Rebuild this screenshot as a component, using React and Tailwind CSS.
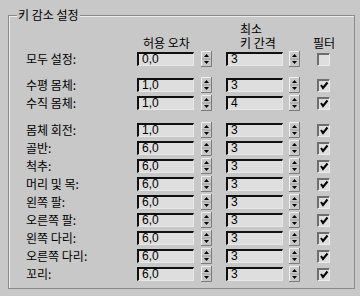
import React from 'react';

const rows = [
  { label: '모두 설정:', tol: '0,0', gap: '3', checked: false, mt: '' },
  { label: '수평 몸체:', tol: '1,0', gap: '3', checked: true, mt: 'mt-[8px]' },
  { label: '수직 몸체:', tol: '1,0', gap: '4', checked: true, mt: '' },
  { label: '몸체 회전:', tol: '1,0', gap: '3', checked: true, mt: 'mt-[9px]' },
  { label: '골반:', tol: '6,0', gap: '3', checked: true, mt: '' },
  { label: '척추:', tol: '6,0', gap: '3', checked: true, mt: '' },
  { label: '머리 및 목:', tol: '6,0', gap: '3', checked: true, mt: '' },
  { label: '왼쪽 팔:', tol: '6,0', gap: '3', checked: true, mt: '' },
  { label: '오른쪽 팔:', tol: '6,0', gap: '3', checked: true, mt: '' },
  { label: '왼쪽 다리:', tol: '6,0', gap: '3', checked: true, mt: '' },
  { label: '오른쪽 다리:', tol: '6,0', gap: '3', checked: true, mt: '' },
  { label: '꼬리:', tol: '6,0', gap: '3', checked: true, mt: '' },
];

const Field = ({ value }) => (
  <div className="w-[57px] h-[14px] box-border bg-[#dedede] border-t-2 border-l-2 border-b border-r border-t-[#101010] border-l-[#101010] border-b-[#e8e8e8] border-r-[#e8e8e8] pl-[3px] text-[12px] leading-[11px] font-['Liberation_Sans',sans-serif]">
    {value}
  </div>
);

const Spinner = () => (
  <svg width="11" height="16" viewBox="0 0 11 16" className="block">
    <rect x="0" y="0" width="11" height="16" fill="#c8c8c8" />
    <path d="M0 15.5H10.5V0" stroke="#7a7a7a" fill="none" />
    <path d="M0.5 15V0.5H10" stroke="#f0f0f0" fill="none" />
    <path d="M1 8H10" stroke="#9a9a9a" />
    <path d="M5.5 3L8 6H3Z" fill="#000" />
    <path d="M3 10H8L5.5 13Z" fill="#000" />
  </svg>
);

const Check = ({ checked }) => (
  <svg width="13" height="13" viewBox="0 0 13 13" className="block">
    <rect x="0" y="0" width="13" height="13" fill="#dedede" />
    <path d="M1 12.5V1H12.5" stroke="#6e6e6e" strokeWidth="2" fill="none" />
    <path d="M1 12.5H12.5V1" stroke="#ececec" fill="none" />
    {checked && <path d="M4 6L6 9L10.5 3.5" stroke="#000" strokeWidth="2" fill="none" />}
  </svg>
);

const App = () => {
  return (
    <div className="w-[360px] h-[296px] bg-[#c8c8c8] pt-[15px] pl-[8px] text-black font-['Noto_Sans_CJK_KR',sans-serif] overflow-hidden">
      <div className="relative w-[347px] h-[274px] box-border border border-[#8a8a8a] shadow-[inset_1px_1px_0_#ececec] pt-[6px] pl-[17px]">
        <div className="absolute left-[8px] top-[-8px] px-[1px] bg-[#c8c8c8] text-[12px] leading-[14px]">
          키 감소 설정
        </div>

        <div className="flex items-end text-[12px] leading-[14px]">
          <div className="w-[117px] shrink-0" />
          <div className="w-[97px] shrink-0">허용 오차</div>
          <div className="w-[73px] shrink-0">
            <div>최소</div>
            <div>키 간격</div>
          </div>
          <div>필터</div>
        </div>

        {rows.map((r) => (
          <div key={r.label} className={`flex items-center h-[18px] ${r.mt}`}>
            <div className="w-[111px] shrink-0 text-[12px] leading-[14px] whitespace-nowrap">{r.label}</div>
            <Field value={r.tol} />
            <div className="ml-[7px]"><Spinner /></div>
            <div className="ml-[14px]"><Field value={r.gap} /></div>
            <div className="ml-[6px]"><Spinner /></div>
            <div className="ml-[17px]"><Check checked={r.checked} /></div>
          </div>
        ))}
      </div>
    </div>
  );
};

export default App;
